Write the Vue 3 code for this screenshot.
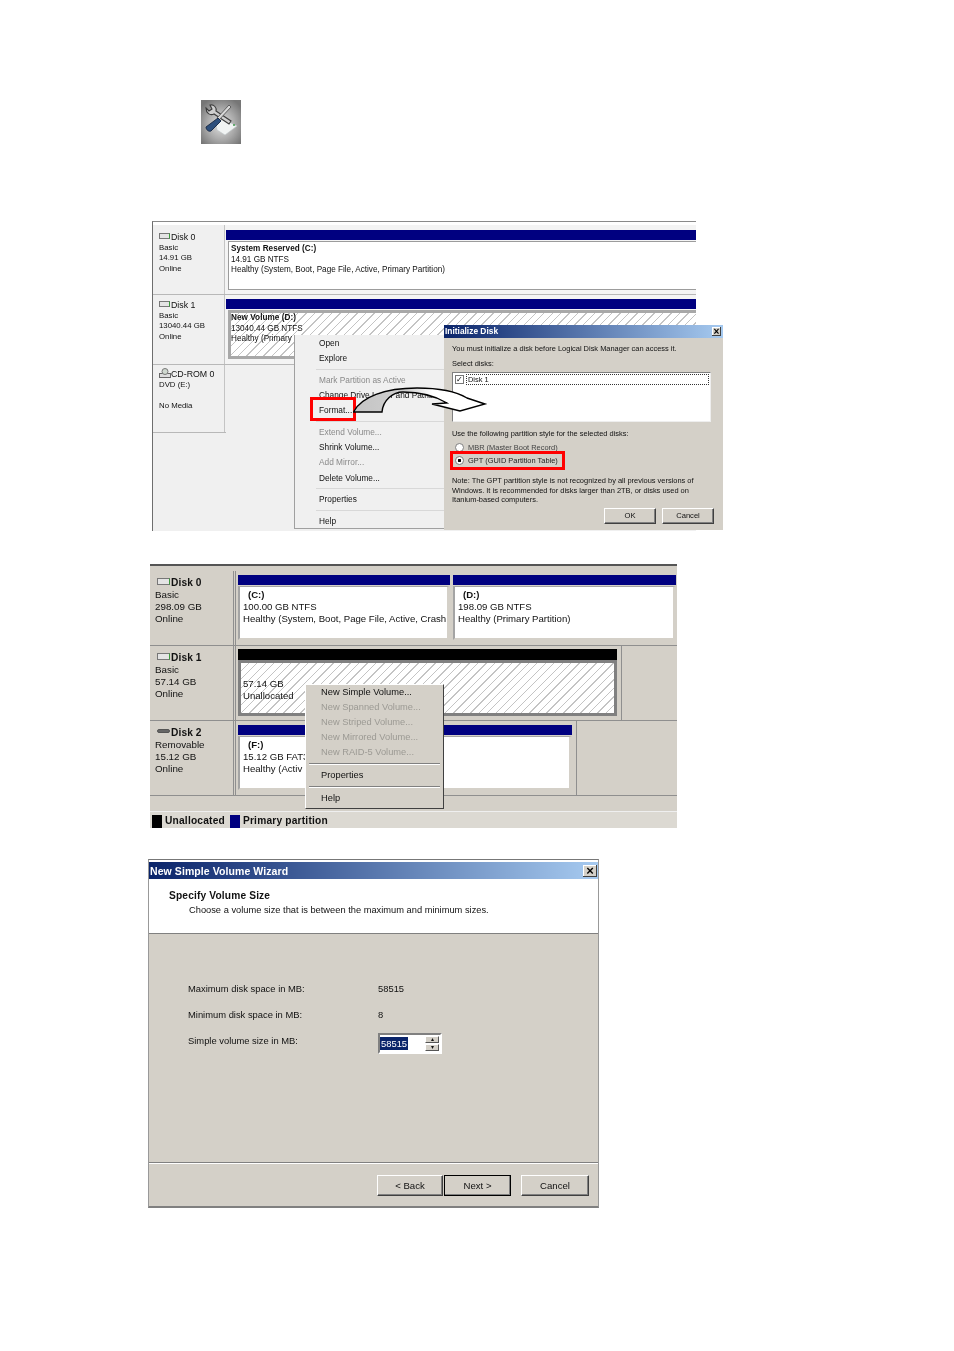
<template>
  <div class="page">
    <!-- Tool icon -->
    <svg class="tool-icon" width="40" height="44" viewBox="0 0 40 44">
      <defs>
        <radialGradient id="toolBg" cx="50%" cy="55%" r="58%">
          <stop offset="0%" stop-color="#e2e2e2" />
          <stop offset="55%" stop-color="#aaa" />
          <stop offset="100%" stop-color="#767676" />
        </radialGradient>
      </defs>
      <rect x="-2" y="-2" width="44" height="48" fill="url(#toolBg)" />
      <path d="M15 24 L22 19 L36 26 L24 35 L16 30 Z" fill="#f0f3f3" stroke="#bcc2c4" stroke-width="0.6" />
      <circle cx="33" cy="25" r="1" fill="#3f9a4c" />
      <path d="M5 8 L8 11 L11 9 L9 5 C13 4 16 8 15 11 L30 21 L28 24 L13 14 C9 16 5 13 5 8 Z" fill="#cfcfcf" stroke="#3c3c3c" stroke-width="1.1" />
      <path d="M28 5 L30 7 L18 20 L16 18 Z" fill="#d8d8d8" stroke="#555" stroke-width="0.9" />
      <path d="M17 18 L20 21 L10 31 C8 32 5 30 5 27 Z" fill="#2d4f7c" stroke="#162640" stroke-width="0.9" />
    </svg>

    <!-- Figure 1: Disk Management + Initialize Disk -->
    <div class="fig1">
      <div class="f1-row" v-for="d in fig1Disks" :key="d.name">
        <div class="f1-label">
          <div class="f1-name">
            <svg v-if="d.cd" class="cd-ico" width="12" height="10" viewBox="0 0 12 10"><rect x="0.5" y="5.5" width="11" height="4" fill="#ddd" stroke="#666" /><circle cx="6" cy="3.5" r="3" fill="#cfd8cf" stroke="#777" /></svg>
            <span v-else class="disk-ico"></span>{{ d.name }}
          </div>
          <div v-for="l in d.lines" :key="l">{{ l }}&nbsp;</div>
        </div>
        <div class="f1-vol" v-if="d.vol">
          <div class="bar"></div>
          <div class="f1-box" :class="{ selected: d.hatch }">
            <b>{{ d.vol }}</b>
            <div>{{ d.size }}</div>
            <div>{{ d.state }}</div>
          </div>
        </div>
      </div>

      <!-- Context menu -->
      <div class="f1-menu">
        <template v-for="(m, i) in fig1Menu" :key="i">
          <div v-if="m === '-'" class="f1-sep"></div>
          <div v-else class="f1-item" :class="{ off: m.off }">{{ m.t }}</div>
        </template>
      </div>
      <div class="format-mark"></div>

      <!-- Initialize Disk dialog -->
      <div class="init">
        <div class="title init-title">Initialize Disk<span class="close">×</span></div>
        <div class="init-body">
          <div class="i-line">You must initialize a disk before Logical Disk Manager can access it.</div>
          <div class="i-line i-select">Select disks:</div>
          <div class="i-list"><span class="check">✓</span><span class="i-disk">Disk 1</span></div>
          <div class="i-line i-use">Use the following partition style for the selected disks:</div>
          <div class="i-radio"><span class="radio"></span>MBR (Master Boot Record)</div>
          <div class="i-radio i-gpt"><span class="radio on"></span>GPT (GUID Partition Table)</div>
          <div class="i-note">Note: The GPT partition style is not recognized by all previous versions of<br />Windows. It is recommended for disks larger than 2TB, or disks used on<br />Itanium-based computers.</div>
          <div class="i-btns"><span class="btn i-btn">OK</span><span class="btn i-btn">Cancel</span></div>
        </div>
      </div>

      <!-- Arrow over both -->
      <svg class="arrow" width="140" height="30" viewBox="0 0 140 30">
        <defs>
          <linearGradient id="arrowFill" x1="0" x2="1" y1="0" y2="0">
            <stop offset="0%" stop-color="#c4c4c4" />
            <stop offset="40%" stop-color="#cfcfcf" />
            <stop offset="60%" stop-color="#fff" />
          </linearGradient>
        </defs>
        <path d="M0.5 25 C8 10 32 1 64 1 C86 1 104 5 114 11 L132 17 L107 24 L79 17 L94 16 C84 10 70 5 50 5 C40 5 30 13 29 25 Z" fill="url(#arrowFill)" stroke="#000" stroke-width="1.4" stroke-linejoin="miter" />
      </svg>
    </div>

    <!-- Figure 2: Unallocated disk -->
    <div class="fig2">
      <div class="f2-row" v-for="d in fig2Disks" :key="d.name">
        <div class="f2-label">
          <div class="f2-name"><span class="disk-ico" :class="{ usb: d.usb }"></span>{{ d.name }}</div>
          <div v-for="l in d.lines" :key="l">{{ l }}</div>
        </div>
        <div class="f2-vols" :style="{ width: d.width + 'px' }">
          <div v-for="v in d.vols" :key="v.size" class="f2-vol" :style="{ flex: v.flex }">
            <div class="bar" :class="{ black: v.black }"></div>
            <div class="f2-box" :class="{ selected: v.black }">
              <b class="f2-letter">{{ v.letter }}&nbsp;</b>
              <div>{{ v.size }}</div>
              <div class="nowrap">{{ v.state }}</div>
            </div>
          </div>
        </div>
      </div>
      <div class="f2-gap"></div>
      <div class="legend">
        <span class="swatch sw-black"></span><b>Unallocated</b>
        <span class="swatch sw-blue"></span><b>Primary partition</b>
      </div>

      <div class="f2-menu">
        <template v-for="(m, i) in fig2Menu" :key="i">
          <div v-if="m === '-'" class="f2-sep"></div>
          <div v-else class="f2-item" :class="{ off: m.off }">{{ m.t }}</div>
        </template>
      </div>
    </div>

    <!-- Figure 3: New Simple Volume Wizard -->
    <div class="fig3">
      <div class="title wiz-title">New Simple Volume Wizard<span class="close wiz-close">×</span></div>
      <div class="wiz-head">
        <b>Specify Volume Size</b>
        <div class="wiz-sub">Choose a volume size that is between the maximum and minimum sizes.</div>
      </div>
      <div class="wiz-main">
        <div class="wiz-grid">
          <span>Maximum disk space in MB:</span><span>58515</span>
          <span>Minimum disk space in MB:</span><span>8</span>
          <span>Simple volume size in MB:</span>
          <span class="spin">
            <span class="spin-sel">58515</span>
            <span class="spin-btns"><i>▴</i><i>▾</i></span>
          </span>
        </div>
      </div>
      <div class="wiz-foot">
        <span class="btn w-btn w-back">&lt; Back</span>
        <span class="btn w-btn w-next">Next &gt;</span>
        <span class="btn w-btn w-cancel">Cancel</span>
      </div>
    </div>
  </div>
</template>

<script setup>
const fig1Disks = [
  { name: 'Disk 0', lines: ['Basic', '14.91 GB', 'Online'], vol: 'System Reserved  (C:)', size: '14.91 GB NTFS', state: 'Healthy (System, Boot, Page File, Active, Primary Partition)' },
  { name: 'Disk 1', lines: ['Basic', '13040.44 GB', 'Online'], vol: 'New Volume  (D:)', size: '13040.44 GB NTFS', state: 'Healthy (Primary', hatch: true },
  { name: 'CD-ROM 0', cd: true, lines: ['DVD (E:)', '', 'No Media'] },
]

const fig1Menu = [
  { t: 'Open' }, { t: 'Explore' }, '-',
  { t: 'Mark Partition as Active', off: true }, { t: 'Change Drive Letter and Paths...' }, { t: 'Format...' }, '-',
  { t: 'Extend Volume...', off: true }, { t: 'Shrink Volume...' }, { t: 'Add Mirror...', off: true }, { t: 'Delete Volume...' }, '-',
  { t: 'Properties' }, '-', { t: 'Help' },
]

const fig2Disks = [
  { name: 'Disk 0', lines: ['Basic', '298.09 GB', 'Online'], width: 441, vols: [
    { letter: '(C:)', size: '100.00 GB NTFS', state: 'Healthy (System, Boot, Page File, Active, Crash', flex: '0 0 212px' },
    { letter: '(D:)', size: '198.09 GB NTFS', state: 'Healthy (Primary Partition)', flex: '1' },
  ] },
  { name: 'Disk 1', lines: ['Basic', '57.14 GB', 'Online'], width: 386, vols: [
    { letter: '', size: '57.14 GB', state: 'Unallocated', flex: '1', black: true },
  ] },
  { name: 'Disk 2', usb: true, lines: ['Removable', '15.12 GB', 'Online'], width: 341, vols: [
    { letter: '(F:)', size: '15.12 GB FAT3', state: 'Healthy (Activ', flex: '1' },
  ] },
]

const fig2Menu = [
  { t: 'New Simple Volume...' }, { t: 'New Spanned Volume...', off: true }, { t: 'New Striped Volume...', off: true },
  { t: 'New Mirrored Volume...', off: true }, { t: 'New RAID-5 Volume...', off: true }, '-', { t: 'Properties' }, '-', { t: 'Help' },
]
</script>

<style>
body { background: #fff; }
</style>

<style scoped>
.page {
  width: 954px;
  height: 1351px;
  padding-top: 100px;
  box-sizing: border-box;
  overflow: hidden;
  background: #fff;
  color: #111;
  font-family: "Liberation Sans", Arial, sans-serif;
}

.tool-icon {
  display: block;
  margin-left: 201px;
  filter: blur(0.5px);
  clip-path: inset(0);
}

.bar {
  height: 10px;
  background: #000080;
}

.bar.black {
  height: 11px;
  background: #000;
}

.nowrap { white-space: nowrap; overflow: hidden; }

.disk-ico {
  display: inline-block;
  width: 11px;
  height: 5px;
  margin-right: 1px;
  margin-left: 2px;
  vertical-align: 1px;
  background: #e4e4e4;
  border: 1px solid #777;
  border-right-color: #3c9a3c;
  box-sizing: content-box;
}

.disk-ico.usb {
  height: 2px;
  vertical-align: 3px;
  background: #666;
  border-color: #555;
  border-radius: 2px;
}

/* Figure 1 */
.fig1 {
  position: relative;
  width: 543px;
  height: 309px;
  margin: 77px 0 0 152px;
  border-top: 1px solid #8a8a8a;
  border-left: 1px solid #6e6e6e;
  background: #f0f0f0;
  box-shadow: inset 0 3px 0 #fff;
  font-size: 8.17px;
  line-height: 10.5px;
  filter: blur(0.35px);
}

.f1-row {
  display: grid;
  grid-template-columns: 72px 1fr;
  height: 69px;
  border-bottom: 1px solid #b8b8b8;
}

.f1-row:first-child { margin-top: 3px; }
.f1-row:nth-child(3) { width: 73px; height: 67px; }

.f1-label {
  padding: 7px 0 0 6px;
  border-right: 1px solid #c4c4c4;
  font-size: 7.8px;
}

.f1-row:nth-child(2) .f1-label { padding-top: 5px; }
.f1-row:nth-child(3) .f1-label { padding-top: 3px; }

.f1-name {
  height: 10.5px;
  font-size: 8.8px;
  white-space: nowrap;
}

.f1-row:nth-child(3) .f1-name { height: 11.5px; }

.f1-name .disk-ico {
  width: 9px;
  height: 4px;
  margin-left: 0;
}

.cd-ico {
  vertical-align: -1px;
}

.f1-vol {
  display: flex;
  flex-direction: column;
  padding: 5px 0 0 1px;
  background: #f4f4f4;
}

.f1-row:nth-child(2) .f1-vol { padding-top: 4px; }

.f1-box {
  flex: 0 0 49px;
  margin: 1px 0 0 2px;
  padding: 2px 0 0 2px;
  box-sizing: border-box;
  background: #fff;
  border: 1px solid #9c9c9c;
  border-right: 0;
  white-space: nowrap;
}

.f1-box b { letter-spacing: 0.05px; }

.f1-box.selected {
  border: 3px solid #a8a8a8;
  border-right: 0;
  padding: 0;
  background: repeating-linear-gradient(135deg, #fff 0 5px, #c4c4c4 5px 6px);
}

.f1-menu {
  position: absolute;
  left: 141px;
  top: 113px;
  width: 150px;
  height: 194px;
  padding: 1px 0 0 24px;
  box-sizing: border-box;
  background: #f0f0f0;
  border-left: 1px solid #a0a0a0;
  border-bottom: 1px solid #a0a0a0;
  font-size: 8.3px;
}

.f1-item { height: 15.2px; line-height: 15.2px; white-space: nowrap; }
.f1-item.off { color: #8a8a8a; }
.f1-sep { height: 1px; margin: 2.75px 0 2.75px -3px; background: #d8d8d8; }

.format-mark {
  position: absolute;
  left: 157px;
  top: 175px;
  width: 46px;
  height: 24px;
  box-sizing: border-box;
  border: 3px solid #f00;
}

.title {
  position: relative;
  display: flex;
  align-items: center;
  color: #fff;
  font-weight: 700;
  background: linear-gradient(90deg, #0a246a, #a6caf0);
}

.close {
  position: absolute;
  background: #d4d0c8;
  color: #000;
  text-align: center;
  font-weight: 700;
  box-shadow: inset -1px -1px 0 #404040, inset 1px 1px 0 #fff;
}

.init {
  position: absolute;
  left: 291px;
  top: 103px;
  width: 279px;
  height: 205px;
  background: #d4d0c8;
  z-index: 2;
}

.init-title {
  height: 13px;
  padding-left: 1px;
  font-size: 8.4px;
}

.init-title .close {
  right: 2px;
  top: 2px;
  width: 9px;
  height: 9px;
  line-height: 9px;
  font-size: 10px;
}

.init-body {
  padding: 6px 0 0 8px;
  font-size: 7.45px;
  line-height: 10px;
}

.i-select { margin-top: 5px; }

.i-list {
  display: flex;
  align-items: flex-start;
  width: 259px;
  height: 50px;
  margin-top: 3px;
  box-sizing: border-box;
  background: #fff;
  border: 1px solid #808080;
  border-right-color: #eee;
  border-bottom-color: #eee;
  padding: 1px 1px 0 2px;
}

.check {
  width: 7px;
  height: 7px;
  margin-top: 1px;
  border: 1px solid #777;
  line-height: 7px;
  font-size: 8px;
  color: #000;
}

.i-disk {
  flex: 1;
  margin-left: 2px;
  padding-left: 1px;
  height: 11px;
  border: 1px dotted #333;
  box-sizing: border-box;
}

.i-use { margin-top: 7px; }

.i-radio {
  display: flex;
  align-items: center;
  height: 13px;
  margin-top: 2px;
  padding-left: 3px;
  color: #444;
}

.i-gpt {
  position: relative;
  margin-top: 0;
  color: #222;
}

.i-gpt::after {
  content: "";
  position: absolute;
  left: -2px;
  top: -3px;
  width: 115px;
  height: 19px;
  box-sizing: border-box;
  border: 3px solid #f00;
}

.radio {
  width: 7px;
  height: 7px;
  margin-right: 4px;
  border-radius: 50%;
  background: #fff;
  border: 1px solid #808080;
  box-sizing: content-box;
}

.radio.on { background: radial-gradient(circle, #000 0 1.4px, #fff 1.6px); }

.i-note {
  margin-top: 9px;
  line-height: 9.6px;
  white-space: nowrap;
}

.i-btns {
  display: flex;
  gap: 6px;
  justify-content: flex-end;
  margin: 3px 9px 0 0;
}

.btn {
  display: flex;
  align-items: center;
  justify-content: center;
  box-sizing: border-box;
  background: #d4d0c8;
  border: 1px solid #fff;
  border-right-color: #404040;
  border-bottom-color: #404040;
  box-shadow: inset -1px -1px 0 #808080;
}

.i-btn {
  width: 52px;
  height: 16px;
  font-size: 7.6px;
}

.arrow {
  position: absolute;
  left: 200px;
  top: 165px;
  z-index: 3;
}

/* Figure 2 */
.fig2 {
  position: relative;
  width: 527px;
  height: 262px;
  margin: 33px 0 0 150px;
  border-top: 2px solid #555;
  background: #d4d0c8;
  font-size: 9.6px;
  line-height: 11.8px;
  filter: blur(0.35px);
}

.f2-row {
  display: flex;
  height: 74px;
  border-bottom: 1px solid #8f8f8f;
}

.f2-row:first-child { margin-top: 5px; }

.f2-label {
  width: 86px;
  flex: none;
  padding: 6px 0 0 5px;
  box-sizing: border-box;
  border-right: 3px double #8f8f8f;
  font-size: 9.8px;
  line-height: 12.3px;
}

.f2-name {
  font-weight: 700;
  font-size: 10.2px;
  letter-spacing: 0.1px;
  line-height: 11.5px;
  white-space: nowrap;
}

.f2-vols {
  display: flex;
  gap: 3px;
  padding: 4px 1px 0 2px;
  box-sizing: border-box;
  border-right: 1px solid #8f8f8f;
}

.f2-row:nth-child(2) .f2-vols { padding: 3px 4px 0 2px; }
.f2-row:nth-child(3) .f2-vols { padding: 4px 4px 0 2px; }
.f2-row:first-child .f2-vols { border-right: 0; }

.f2-vol { min-width: 0; }

.f2-box {
  height: 54px;
  margin-top: 1px;
  padding: 2px 0 0 3px;
  box-sizing: border-box;
  background: #fff;
  border: 2px solid #a4a4a4;
  border-top-width: 1px;
  border-right-width: 3px;
  border-right-color: #d4d0c8;
  border-bottom-color: #d4d0c8;
  overflow: hidden;
}

.f2-box.selected {
  height: 56px;
  margin-top: 0;
  border: 3px solid #808080;
  padding: 0 0 0 2px;
  background: repeating-linear-gradient(135deg, #fff 0 5px, #c4c4c4 5px 6px);
}

.f2-box.selected .f2-letter { height: 15px; }

.f2-letter {
  display: block;
  height: 12px;
  padding-left: 5px;
}

.f2-gap { height: 15px; }

.legend {
  display: flex;
  align-items: flex-end;
  height: 17px;
  padding-left: 2px;
  box-sizing: border-box;
  background: #dcd9d2;
  font-size: 10.2px;
  letter-spacing: 0.2px;
  line-height: 15px;
  border-top: 1px solid #efefef;
}

.swatch {
  width: 10px;
  height: 13px;
  margin-right: 3px;
}

.sw-black { background: #000; }
.sw-blue { background: #000080; margin-left: 5px; }

.f2-menu {
  position: absolute;
  left: 155px;
  top: 118px;
  width: 139px;
  height: 125px;
  padding: 0 3px 0 3px;
  box-sizing: border-box;
  background: #d4d0c8;
  border: 1px solid #fff;
  border-right-color: #404040;
  border-bottom-color: #404040;
  font-size: 9.3px;
  z-index: 2;
}

.f2-item {
  height: 15px;
  line-height: 15px;
  padding-left: 12px;
  white-space: nowrap;
}

.f2-item.off { color: #9c9a94; }

.f2-sep {
  height: 2px;
  margin: 3px 0 3px;
  background: #808080;
  border-bottom: 1px solid #fff;
  box-sizing: border-box;
}

/* Figure 3 */
.fig3 {
  width: 451px;
  height: 349px;
  margin: 31px 0 0 148px;
  padding-top: 2px;
  box-sizing: border-box;
  display: flex;
  flex-direction: column;
  border: 1px solid #999;
  border-top-color: #777;
  border-bottom: 2px solid #808080;
  background: #d4d0c8;
  font-size: 9.4px;
  filter: blur(0.35px);
}

.wiz-title {
  height: 17px;
  flex: none;
  padding-left: 1px;
  font-size: 10.5px;
  letter-spacing: 0.08px;
  box-shadow: 0 -2px 0 #fff;
}

.wiz-close {
  right: 1px;
  top: 3px;
  width: 14px;
  height: 12px;
  line-height: 12px;
  font-size: 13px;
}

.wiz-head {
  height: 55px;
  flex: none;
  padding: 10px 0 0 20px;
  box-sizing: border-box;
  background: #fff;
  border-bottom: 1px solid #808080;
  line-height: 14px;
}

.wiz-head b { font-size: 10.2px; letter-spacing: 0.15px; }

.wiz-sub { padding-left: 20px; font-size: 9.3px; }

.wiz-main { flex: 1; padding: 48px 0 0 39px; }

.wiz-grid {
  display: grid;
  grid-template-columns: 190px auto;
  grid-auto-rows: 26px;
  justify-content: start;
  line-height: 13px;
}

.spin {
  display: flex;
  align-items: center;
  justify-content: space-between;
  width: 64px;
  height: 21px;
  margin-top: -1px;
  box-sizing: border-box;
  background: #fff;
  border: 2px solid #808080;
  border-right-color: #fff;
  border-bottom-color: #fff;
}

.spin-sel {
  background: #0a246a;
  color: #fff;
  line-height: 13px;
  padding: 0 1px;
}

.spin-btns {
  display: flex;
  flex-direction: column;
  gap: 1px;
  margin-right: 1px;
}

.spin-btns i {
  display: block;
  width: 14px;
  height: 7px;
  background: #d4d0c8;
  border: 1px solid #fff;
  border-right-color: #555;
  border-bottom-color: #555;
  box-sizing: border-box;
  font-style: normal;
  font-size: 6px;
  line-height: 5px;
  text-align: center;
}

.wiz-foot {
  display: flex;
  flex: none;
  height: 44px;
  padding: 12px 9px 0 228px;
  box-sizing: border-box;
  border-top: 1px solid #808080;
  box-shadow: inset 0 1px 0 #fff;
}

.w-btn {
  width: 67px;
  height: 21px;
  font-size: 9.6px;
}

.w-back { width: 66px; }

.w-next {
  outline: 1px solid #000;
  outline-offset: -1px;
  margin-left: 1px;
}

.w-cancel { margin-left: 10px; width: 68px; }
</style>
